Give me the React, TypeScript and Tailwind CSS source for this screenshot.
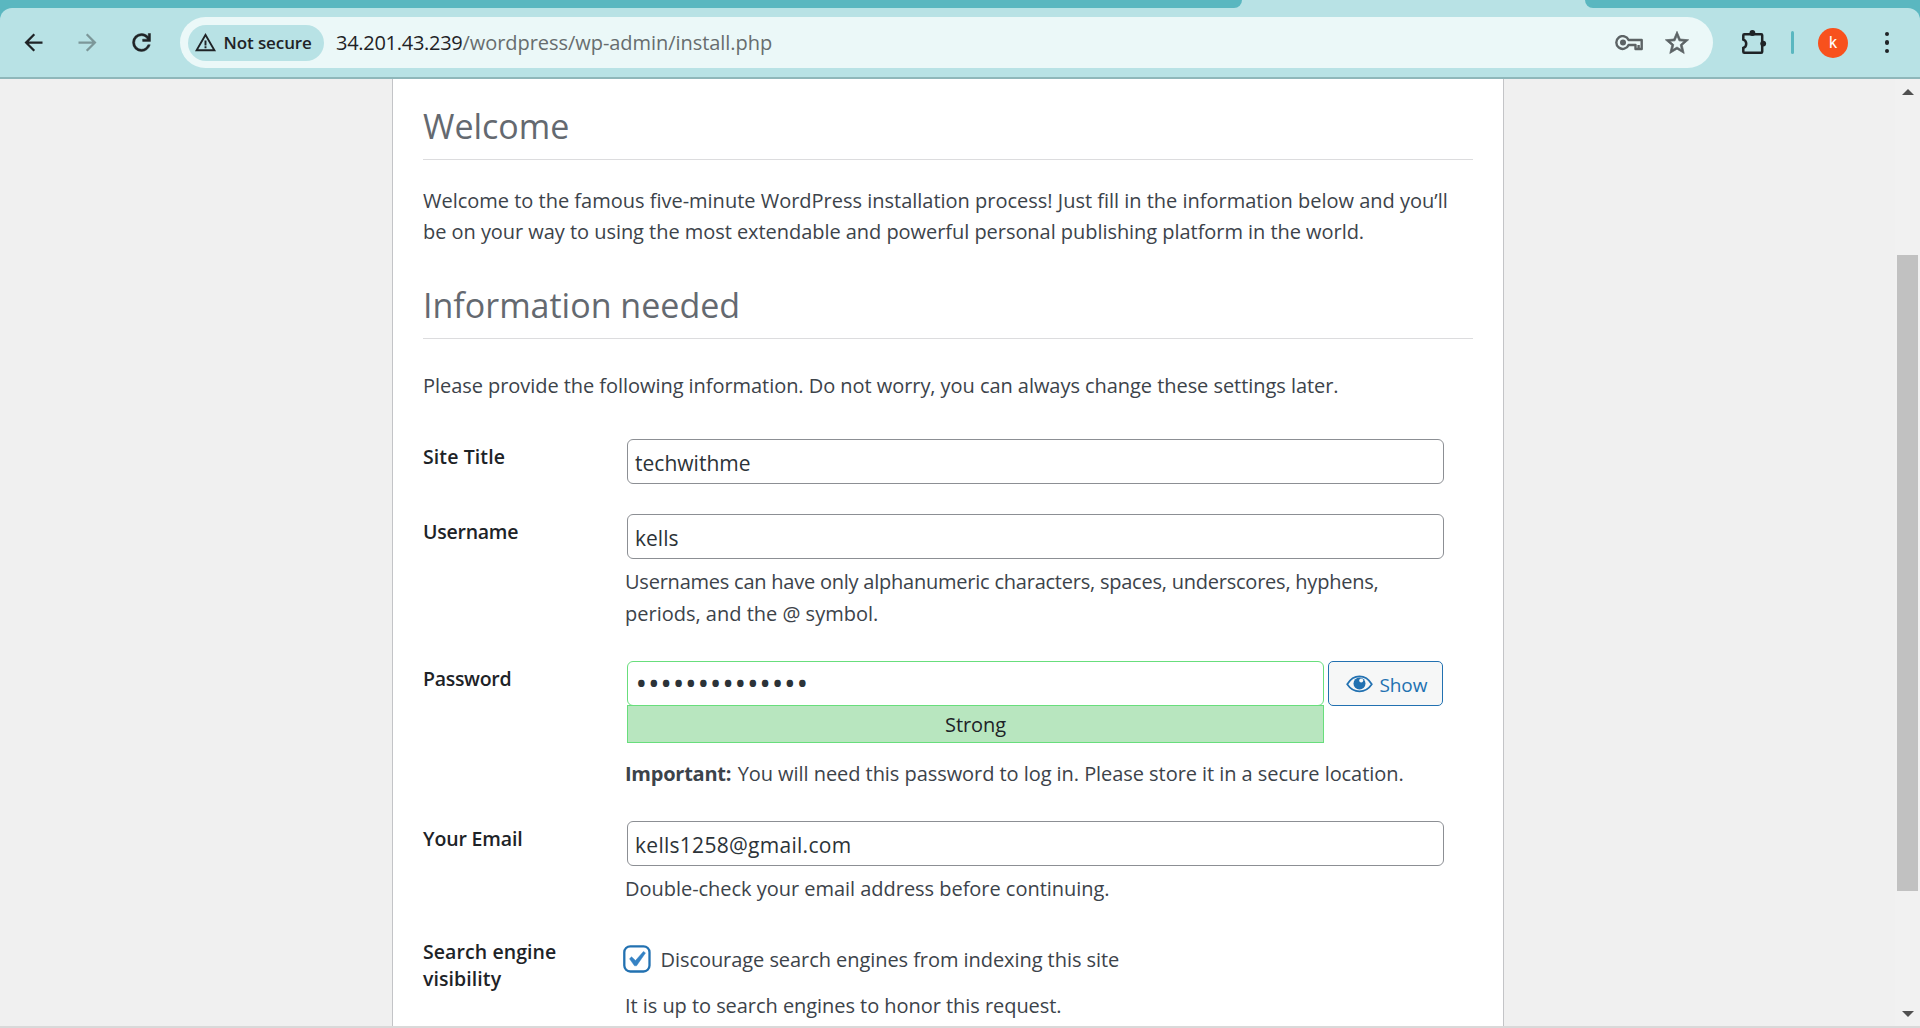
import type { ReactNode } from "react";

function Toolbar() {
  return (
    <header className="h-[79px] shrink-0 bg-[#5ab7c0]">
      <div className="flex h-2 justify-between bg-[#b8e2e5]">
        <div className="w-[1242px] rounded-br-[12px] bg-[#5ab7c0]" />
        <div className="w-[335px] rounded-bl-[12px] bg-[#5ab7c0]" />
      </div>
      <div className="flex h-[71px] items-center rounded-t-[12px] border-b-2 border-[#8fb7ba] bg-[#b8e2e5] pl-[19.5px] text-[#1f2326]">
        <div className="flex gap-[27px]">
          <svg className="size-[27px]" viewBox="0 0 24 24" fill="currentColor">
            <path d="M20 11H7.83l5.59-5.59L12 4l-8 8 8 8 1.41-1.41L7.83 13H20z" />
          </svg>
          <svg className="size-[27px] text-[#7c9799]" viewBox="0 0 24 24" fill="currentColor">
            <path d="M4 13h12.17l-5.59 5.59L12 20l8-8-8-8-1.41 1.41L16.17 11H4z" />
          </svg>
          <svg className="size-[27px]" viewBox="0 0 24 24" fill="currentColor" stroke="currentColor" strokeWidth=".4">
            <path d="M12 20q-3.35 0-5.675-2.325T4 12t2.325-5.675T12 4q1.725 0 3.3.712T18 6.75V4h2v7h-7V9h4.2q-.8-1.4-2.188-2.2T12 6Q9.5 6 7.75 7.75T6 12t1.75 4.25T12 18q1.925 0 3.475-1.1T17.65 14h2.1q-.7 2.65-2.85 4.325T12 20" />
          </svg>
        </div>

        <div className="ml-[25.5px] flex h-[51px] w-[1533px] items-center rounded-full bg-[#ebf8f8] pl-2">
          <div className="flex h-9 w-[136px] items-center rounded-full bg-[#b8e2e5] pl-1.5">
            <svg className="size-[23px]" viewBox="0 0 24 24" fill="currentColor">
              <path fillRule="evenodd" d="M1 21 12 2l11 19zm3.45-2h15.1L12 6zM11 16h2v2h-2zm0-6h2v5h-2z" />
            </svg>
            <span className="ml-[6.5px] whitespace-nowrap text-[17px] font-semibold tracking-[-0.1px]">Not secure</span>
          </div>
          <div className="ml-[12px] flex whitespace-nowrap text-[20px] leading-[30px]">
            <span className="tracking-[-0.28px]">34.201.43.239</span>
            <span className="tracking-[-0.05px] text-[#676d6e]">/wordpress/wp-admin/install.php</span>
          </div>
          <div className="ml-auto flex items-center pr-[22px] text-[#5c6365]">
            <svg className="mr-5 h-[16px] w-[28px]" viewBox="0 0 28 16" fill="none" stroke="currentColor" strokeWidth="2.4">
              <path d="M13.6 5H26.7V14H20.5V10H13.6A6.4 6.4 0 1 1 13.6 5Z" strokeLinejoin="round" />
              <path d="M23.6 10V14" />
              <circle cx="8" cy="7.5" r="3" fill="currentColor" stroke="none" />
            </svg>
            <svg className="size-[28px]" viewBox="0 0 24 24" fill="currentColor" stroke="currentColor" strokeWidth=".6">
              <path d="m22 9.24-7.19-.62L12 2 9.19 8.63 2 9.24l5.46 4.73L5.82 21 12 17.27 18.18 21l-1.63-7.03zM12 15.4l-3.76 2.27 1-4.28-3.32-2.88 4.38-.38L12 6.1l1.71 4.04 4.38.38-3.32 2.88 1 4.28z" />
            </svg>
          </div>
        </div>

        <svg className="mb-[2px] ml-[27px] size-[28px]" viewBox="0 0 28 28" fill="currentColor">
          <path
            d="M3.3 7.3q0-1 1-1H21.2q1 0 1 1V23.7q0 1-1 1H4.3q-1 0-1-1V20C7.2 18.6 7.2 12.9 3.3 11.6Z"
            fill="none"
            stroke="currentColor"
            strokeWidth="2.5"
          />
          <circle cx="12.4" cy="5" r="2.9" />
          <circle cx="23.2" cy="15.6" r="2.9" />
        </svg>
        <div className="ml-[23px] h-[23px] w-[3px] rounded-full bg-[#5ab7c0]" />
        <div className="ml-6 flex size-[30px] items-center justify-center rounded-full bg-[#f8511d] pt-px font-[Roboto] text-[16px] text-white">
          k
        </div>
        <div className="ml-[36.5px] flex flex-col gap-[4px]">
          <span className="size-[4.5px] rounded-full bg-current" />
          <span className="size-[4.5px] rounded-full bg-current" />
          <span className="size-[4.5px] rounded-full bg-current" />
        </div>
      </div>
    </header>
  );
}

function Heading({ className, children }: { className: string; children: ReactNode }) {
  return (
    <h1 className={`h-[56px] border-b border-[#dcdcde] text-[34px] leading-[45px] text-[#646970] ${className}`}>
      {children}
    </h1>
  );
}

function Row({ label, className, children }: { label: ReactNode; className: string; children: ReactNode }) {
  return (
    <div className={`flex ${className}`}>
      <div className="w-[202px] shrink-0 pt-1 text-[19.5px] font-semibold leading-[27px] text-[#1d2327]">{label}</div>
      <div className="w-[820px] whitespace-nowrap">{children}</div>
    </div>
  );
}

function Field({ children }: { children: ReactNode }) {
  return (
    <div className="ml-[2px] flex h-[45px] w-[817px] items-center rounded-[6px] border border-[#8c8f94] px-[7px] pt-[5px] text-[21px] text-[#2c3338]">
      {children}
    </div>
  );
}

export default function App() {
  return (
    <div className="flex h-[1028px] w-[1920px] flex-col overflow-hidden bg-[#f0f0f0] font-['Open_Sans','Noto_Sans',sans-serif]">
      <Toolbar />
      <div className="flex min-h-0 flex-1">
        <main className="ml-[392px] w-[1112px] overflow-hidden border-x border-[#c3c4c7] bg-white px-[30px] pt-[25px] text-[20px] leading-[31.5px] text-[#3c434a]">
          <Heading className="">Welcome</Heading>
          <p className="mt-[24.5px] whitespace-nowrap">
            <span className="block tracking-[-0.008px]">
              Welcome to the famous five-minute WordPress installation process! Just fill in the information below and you’ll
            </span>
            <span className="block tracking-[-0.046px]">
              be on your way to using the most extendable and powerful personal publishing platform in the world.
            </span>
          </p>
          <Heading className="mt-[35.5px]">Information needed</Heading>
          <p className="mt-[31px] whitespace-nowrap tracking-[-0.052px]">
            Please provide the following information. Do not worry, you can always change these settings later.
          </p>

          <div className="mt-[37.5px]">
            <Row className="h-[75px]" label={<span className="tracking-[0.1px]">Site Title</span>}>
              <Field>
                <span className="tracking-[0.02px]">techwithme</span>
              </Field>
            </Row>

            <Row className="h-[147px]" label={<span className="tracking-[-0.25px]">Username</span>}>
              <Field>kells</Field>
              <p className="mt-[7px] text-[20px] leading-[32px]">
                <span className="block tracking-[-0.23px]">
                  Usernames can have only alphanumeric characters, spaces, underscores, hyphens,
                </span>
                <span className="block">periods, and the @ symbol.</span>
              </p>
            </Row>

            <Row className="h-[160px]" label={<span className="tracking-[-0.3px]">Password</span>}>
              <div className="flex gap-1 pl-[2px]">
                <div className="w-[697px]">
                  <div className="flex h-[45px] items-center overflow-hidden rounded-[6px] border border-[#68de7c] pl-[7.5px] text-[31px] tracking-[0.72px] text-[#2c3338]">
                    ••••••••••••••
                  </div>
                  <div className="-mt-px h-[38px] border border-[#68de7c] bg-[#b8e6bf] text-center leading-[37px] tracking-[-0.07px] text-[#1d2327]">
                    Strong
                  </div>
                </div>
                <div className="flex h-[45px] w-[115px] items-center rounded-[5px] border border-[#2271b1] bg-[#f6f7f7] pl-[17px] text-[#2271b1]">
                  <svg className="h-[18px] w-[27px]" viewBox="0 0 27 18">
                    <path d="M1.2 9.3C7.5-1.2 19.5-1.2 25.8 9.3 19.5 18.8 7.5 18.8 1.2 9.3Z" fill="none" stroke="currentColor" strokeWidth="1.7" />
                    <circle cx="13.5" cy="8.4" r="6" fill="currentColor" />
                    <circle cx="15.2" cy="5.4" r="2" fill="#f6f7f7" />
                  </svg>
                  <span className="ml-[6.5px] pt-[4px] text-[19px] tracking-[-0.1px]">Show</span>
                </div>
              </div>
              <p className="mt-[15px] flex gap-[6.5px]">
                <strong className="font-bold tracking-[-0.25px]">Important:</strong>
                <span className="tracking-[-0.056px]">
                  You will need this password to log in. Please store it in a secure location.
                </span>
              </p>
            </Row>

            <Row className="h-[113px]" label={<span className="tracking-[-0.15px]">Your Email</span>}>
              <Field>
                <span className="tracking-[0.28px]">kells1258@gmail.com</span>
              </Field>
              <p className="mt-[7px] tracking-[-0.03px]">Double-check your email address before continuing.</p>
            </Row>

            <Row
              className="h-[120px]"
              label={
                <>
                  <span className="block tracking-[0.08px]">Search engine</span>
                  <span className="block tracking-[0.08px]">visibility</span>
                </>
              }
            >
              <div className="flex pt-[9.5px]">
                <svg className="-ml-[2px] mt-[1px] size-7" viewBox="0 0 28 28">
                  <rect x="1.3" y="1.3" width="25.2" height="25.2" rx="6" fill="#fff" stroke="#2271b1" strokeWidth="2.3" />
                  <path
                    d="m14.83 4.89 1.34.94-5.81 8.38H9.02L5.78 9.67l1.34-1.25 2.57 2.4z"
                    fill="#3582c4"
                    stroke="#3582c4"
                    strokeWidth=".3"
                    transform="translate(-2.4 -1.1) scale(1.54)"
                  />
                </svg>
                <span className="ml-[9.5px] tracking-[-0.06px]">Discourage search engines from indexing this site</span>
              </div>
              <p className="mt-[14.5px] tracking-[-0.05px]">It is up to search engines to honor this request.</p>
            </Row>
          </div>
        </main>

        <aside className="ml-auto flex w-[25px] flex-col items-center bg-[#f1f1f1] pt-[10px] pb-[9px]">
          <svg className="h-[6px] w-[12px]" viewBox="0 0 12 6" fill="#505050">
            <path d="M0 6 6 0l6 6z" />
          </svg>
          <div className="mt-[160px] h-[636px] w-[21px] bg-[#c1c1c1]" />
          <svg className="mt-auto h-[6px] w-[12px]" viewBox="0 0 12 6" fill="#505050">
            <path d="M0 0h12L6 6z" />
          </svg>
        </aside>
      </div>
      <div className="h-[2px] shrink-0 bg-[#d9d9d9]" />
    </div>
  );
}
